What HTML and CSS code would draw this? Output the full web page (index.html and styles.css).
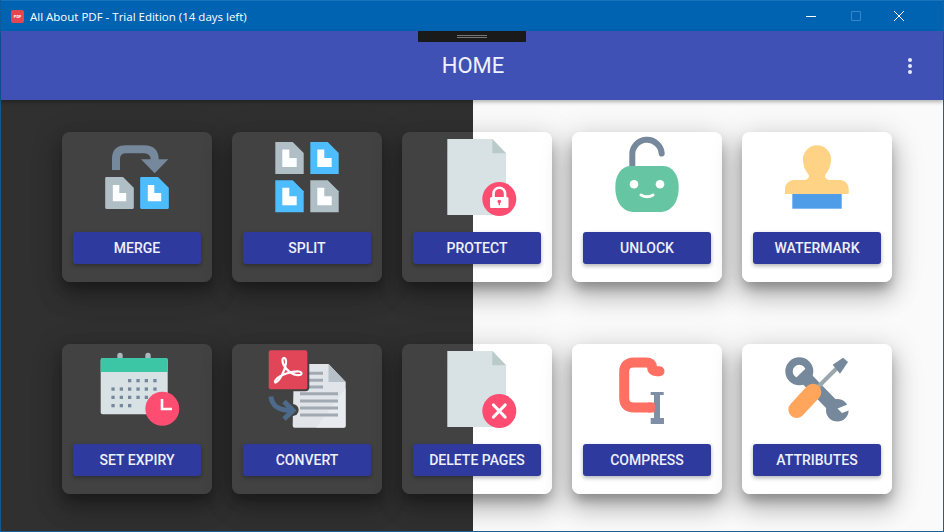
FILE: index.html
```html
<!DOCTYPE html>
<html lang="en">
<head>
    <meta charset="UTF-8">
    <meta name="viewport" content="width=device-width, initial-scale=1.0">
    <title>All About PDF</title>
    <link rel="stylesheet" href="styles.css">
</head>
<body>

<!-- Shared shapes -->
<svg class="defs" aria-hidden="true">
    <defs>
        <symbol id="small-doc" viewBox="0 0 28.4 32" overflow="visible">
            <path d="M0 0H17.4L28.4 11V32H0Z"/>
            <path fill="#fdfeff" stroke="none" d="M7 7.5H14V16H21.4V25H7Z"/>
        </symbol>
        <symbol id="big-doc" viewBox="0 0 150 100">
            <path fill="#d8e2e5" d="M45.3 7H90.3L104 21.3V83H45.3Z"/>
            <path fill="#b8cbc9" d="M90.3 7L104 21.3H90.3Z"/>
            <circle cx="97.3" cy="67" r="17" fill="#ff4d72"/>
        </symbol>
    </defs>
</svg>

<div class="window">
    <!-- Title bar -->
    <div class="titlebar">
        <span class="app-icon">PDF</span>
        <span class="app-title">All About PDF - Trial Edition (14 days left)</span>
        <div class="win-controls">
            <svg class="win-btn" viewBox="0 0 44 20"><path stroke="#fff" d="M17 10.5H27"/></svg>
            <svg class="win-btn" viewBox="0 0 44 20"><path stroke="#3a85c8" fill="none" d="M18.5 5.5H27.5V14.5H18.5Z"/></svg>
            <svg class="win-btn" viewBox="0 0 44 20"><path stroke="#fff" d="M17 5L27 15M27 5L17 15"/></svg>
        </div>
    </div>

    <!-- App bar -->
    <header class="appbar">
        <div class="drag-handle"><span></span></div>
        <h1>HOME</h1>
        <button class="menu-btn" aria-label="Menu"><i></i><i></i><i></i></button>
    </header>

    <main class="tools">
        <div class="card">
            <svg class="icon" viewBox="0 0 150 100">
                <path fill="none" stroke="#76889b" stroke-width="8" d="M54 38V27Q54 17.300 64 17.300H82Q92.700 17.300 92.700 28"/>
                <path fill="#76889b" d="M79 27.300H106.300L92.700 41.300Z"/>
                <use href="#small-doc" class="doc-grey rounded" x="44.300" y="46" width="26.400" height="30"/>
                <use href="#small-doc" class="doc-blue rounded" x="79.300" y="46" width="26.400" height="30"/>
            </svg>
            <button class="button">MERGE</button>
        </div>

        <div class="card">
            <svg class="icon" viewBox="0 0 150 100">
                <use href="#small-doc" class="doc-grey" x="43.300" y="10" width="28.400" height="32"/>
                <use href="#small-doc" class="doc-blue" x="78.300" y="10" width="28.400" height="32"/>
                <use href="#small-doc" class="doc-blue" x="43.300" y="48.300" width="28.400" height="32"/>
                <use href="#small-doc" class="doc-grey" x="78.300" y="48.300" width="28.400" height="32"/>
            </svg>
            <button class="button">SPLIT</button>
        </div>

        <div class="card">
            <svg class="icon" viewBox="0 0 150 100">
                <use href="#big-doc" width="150" height="100"/>
                <path fill="none" stroke="#fff" stroke-width="2.600" d="M91.500 66V61.500A5.800 5.800 0 0 1 103.100 61.500V66"/>
                <rect x="88" y="65" width="18.500" height="11" rx="1.500" fill="#fff"/>
                <circle cx="97.300" cy="69.500" r="1.800" fill="#ff4d72"/>
                <rect x="96.600" y="70" width="1.400" height="3.200" fill="#ff4d72"/>
            </svg>
            <button class="button">PROTECT</button>
        </div>

        <div class="card">
            <svg class="icon" viewBox="0 0 150 100">
                <path fill="none" stroke="#76889b" stroke-width="6" stroke-linecap="round" d="M60.300 38V23.500A14.700 14.700 0 0 1 89.700 21.500"/>
                <path fill="#66c6a3" d="M59 34H91C100 34 106.700 42 106.700 55C106.700 72 98 80 88 80H62C52 80 43.300 72 43.300 55C43.300 42 50 34 59 34Z"/>
                <circle cx="62" cy="52.300" r="4.300" fill="#fff"/>
                <circle cx="88" cy="52.300" r="4.300" fill="#fff"/>
                <path fill="none" stroke="#fff" stroke-width="3" stroke-linecap="round" d="M69 63Q75 66.500 81 63"/>
            </svg>
            <button class="button">UNLOCK</button>
        </div>

        <div class="card">
            <svg class="icon" viewBox="0 0 150 100">
                <path fill="#ffd385" d="M43 62V57C43 52 47 48 52 48H62C65 48 67 46 67 44C67 42 61 38 61 27.300A14 14 0 0 1 89 27.300C89 38 83 42 83 44C83 46 85 48 88 48H98C103 48 106.700 52 106.700 57V62Z"/>
                <rect x="50.300" y="62" width="49.400" height="14.700" fill="#4f9de8"/>
            </svg>
            <button class="button">WATERMARK</button>
        </div>

        <div class="card">
            <svg class="icon" viewBox="0 0 150 100">
                <path stroke="#a9b8c0" stroke-width="5.400" stroke-linecap="round" d="M58 11.500V16M86 11.500V16"/>
                <rect x="38.700" y="14" width="67" height="56.300" rx="2" fill="#d8e2e5"/>
                <path fill="#3dc6a6" d="M40.700 14H103.700A2 2 0 0 1 105.700 16V28H38.700V16A2 2 0 0 1 40.700 14Z"/>
                <g fill="#76889b">
                    <rect x="66" y="35" width="3.300" height="3.300"/><rect x="74.400" y="35" width="3.300" height="3.300"/><rect x="82.700" y="35" width="3.300" height="3.300"/><rect x="91.300" y="35" width="3.300" height="3.300"/>
                    <rect x="49.400" y="43.400" width="3.300" height="3.300"/><rect x="57.700" y="43.400" width="3.300" height="3.300"/><rect x="66" y="43.400" width="3.300" height="3.300"/><rect x="74.400" y="43.400" width="3.300" height="3.300"/><rect x="82.700" y="43.400" width="3.300" height="3.300"/><rect x="91.300" y="43.400" width="3.300" height="3.300"/>
                    <rect x="49.400" y="51.700" width="3.300" height="3.300"/><rect x="57.700" y="51.700" width="3.300" height="3.300"/><rect x="66" y="51.700" width="3.300" height="3.300"/><rect x="74.400" y="51.700" width="3.300" height="3.300"/><rect x="82.700" y="51.700" width="3.300" height="3.300"/>
                    <rect x="49.400" y="60" width="3.300" height="3.300"/><rect x="57.700" y="60" width="3.300" height="3.300"/><rect x="66" y="60" width="3.300" height="3.300"/>
                </g>
                <circle cx="100.300" cy="64.700" r="17" fill="#ff4d72"/>
                <path fill="none" stroke="#fff" stroke-width="2.600" d="M100 55V65H110"/>
            </svg>
            <button class="button">SET EXPIRY</button>
        </div>

        <div class="card">
            <svg class="icon" viewBox="0 0 150 100">
                <path fill="#e1e5ea" d="M62 20H96.500L113.700 38V81.700A2 2 0 0 1 111.700 83.700H62.700A2 2 0 0 1 60.700 81.700Z"/>
                <path fill="#eceef2" d="M113.700 44V81.700A2 2 0 0 1 111.700 83.700H84Z" opacity=".6"/>
                <path fill="#b7bfc9" d="M96.500 20L113.700 38H96.500Z"/>
                <g stroke="#a1a9b2" stroke-width="3">
                    <path d="M74 29.300H91M74 36.300H91M74 43H91"/>
                    <path d="M68 49.700H106M68 57H106M68 64H106M68 71H106"/>
                </g>
                <!-- dark notch the arrow sits in -->
                <circle cx="60.700" cy="66" r="6" fill="#424242"/>
                <path fill="none" stroke="#4d6a8a" stroke-width="5" d="M39 52.500C40 62 46 66.500 60 66.500"/>
                <path fill="none" stroke="#4d6a8a" stroke-width="5" d="M52 57.500L61 66.500L52 75"/>
                <rect x="34.700" y="4.300" width="42.600" height="43" rx="4" fill="#424242"/>
                <rect x="36.700" y="6.300" width="38.600" height="39" rx="2" fill="#e04558"/>
                <path fill="none" stroke="#fff" stroke-width="2.200" d="M43.500 38.500C47 38 53 27 54 19C54.500 13.500 51 12.500 50.500 16C50 22 58 30 64.500 31C70.500 32 71 28 67 27.500C60 27 48 31 44.500 35C42.500 37 42.500 39 44 38.500Z"/>
            </svg>
            <button class="button">CONVERT</button>
        </div>

        <div class="card">
            <svg class="icon" viewBox="0 0 150 100">
                <use href="#big-doc" width="150" height="100"/>
                <path fill="none" stroke="#fff" stroke-width="3.200" stroke-linecap="round" d="M91.500 61L103.100 73M103.100 61L91.500 73"/>
            </svg>
            <button class="button">DELETE PAGES</button>
        </div>

        <div class="card">
            <svg class="icon" viewBox="0 0 150 100">
                <g fill="#7f8fa5">
                    <rect x="82" y="48" width="6" height="32"/>
                    <rect x="78.700" y="48" width="13" height="3"/>
                    <rect x="78.700" y="74" width="13.300" height="6"/>
                </g>
                <path fill="none" stroke="#ff7062" stroke-width="10" stroke-linecap="round" d="M87.500 27.300H84.500Q80 27.300 80 23Q79.500 18.500 74 18.500H62Q52.200 18.500 52.200 28V54Q52.200 63.500 62 63.500H78"/>
                <rect x="76" y="58.500" width="6.500" height="10" fill="#ff7062"/>
            </svg>
            <button class="button">COMPRESS</button>
        </div>

        <div class="card">
            <svg class="icon" viewBox="0 0 150 100">
                <path stroke="#76889b" stroke-width="13" d="M59 29L95 66"/>
                <circle cx="95.300" cy="66.300" r="11.300" fill="#76889b"/>
                <path fill="#fff" d="M95.500 64.500L108 59.500V66L100 69Z"/>
                <circle cx="57.300" cy="27.300" r="10.300" fill="none" stroke="#76889b" stroke-width="7.400"/>
                <path stroke="#9aa8ad" stroke-width="4" d="M74 45L98 21"/>
                <path fill="#76889b" d="M90.700 20.700L101 13.700L106 18L98 29.700Z"/>
                <path stroke="#ffa65c" stroke-width="16.700" stroke-linecap="round" d="M54.700 65.700L71 48"/>
            </svg>
            <button class="button">ATTRIBUTES</button>
        </div>
    </main>
</div>

</body>
</html>
```

FILE: styles.css
```css
* {
    box-sizing: border-box;
}
body {
    margin: 0;
    height: 100vh;
    overflow: hidden;
    font-family: Roboto, Arial, sans-serif;
}
.defs {
    position: absolute;
    width: 0;
    height: 0;
}
.window {
    display: flex;
    flex-direction: column;
    height: 100%;
    border: 1px solid #1c6098;
    border-top: none;
    border-left-color: #0f5a98;
}

/* Title bar */
.titlebar {
    display: flex;
    align-items: center;
    flex: 0 0 31px;
    padding-left: 10px;
    background-color: #0063b1;
    border-top: 1px solid #1a72ba;
    color: #fff;
}
.app-icon {
    width: 13px;
    height: 13px;
    border-radius: 2px;
    background-color: #e8464f;
    color: #fff;
    font-size: 4px;
    font-weight: bold;
    line-height: 13px;
    text-align: center;
    overflow: hidden;
}
.app-title {
    margin-left: 6px;
    font-family: "Open Sans", Arial, sans-serif;
    font-size: 11.5px;
}
.win-controls {
    display: flex;
    margin-left: auto;
    padding-right: 22px;
}
.win-btn {
    display: block;
    width: 44px;
    height: 20px;
}

/* App bar */
.appbar {
    position: relative;
    z-index: 2;
    display: flex;
    align-items: center;
    justify-content: center;
    flex: 0 0 69px;
    padding-left: 2px;
    background-color: #3f51b5;
    box-shadow: 0 2px 4px rgba(0, 0, 0, 0.3);
}
.appbar h1 {
    margin: 0;
    color: #f0f2fb;
    font-size: 22px;
    font-weight: 400;
}
.drag-handle {
    position: absolute;
    top: 0;
    left: 417px;
    display: flex;
    justify-content: center;
    width: 108px;
    height: 11px;
    padding-top: 4px;
    background-color: #1a1a1a;
}
.drag-handle span {
    width: 30px;
    height: 3px;
    border-top: 1px solid #777;
    border-bottom: 1px solid #777;
}
.menu-btn {
    position: absolute;
    top: 27px;
    right: 31px;
    display: flex;
    flex-direction: column;
    gap: 2px;
    padding: 0;
    border: none;
    background: none;
}
.menu-btn i {
    width: 4px;
    height: 4px;
    border-radius: 50%;
    background-color: #e8eaf6;
}

/* Tool grid, dark on the left half and light on the right */
.tools {
    flex: 1;
    display: grid;
    grid-template-columns: repeat(5, 150px);
    grid-auto-rows: 150px;
    column-gap: 20px;
    row-gap: 62px;
    padding: 32px 0 0 61px;
    overflow: hidden;
    background: linear-gradient(to right, #303030 473px, #fafafa 473px) fixed;
}
.card {
    display: flex;
    flex-direction: column;
    border-radius: 8px;
    background: linear-gradient(to right, #424242 473px, #fff 473px) fixed;
    box-shadow: 0 8px 12px -2px rgba(0, 0, 0, 0.28), 0 14px 24px 2px rgba(0, 0, 0, 0.18), 0 6px 30px 5px rgba(0, 0, 0, 0.12);
}
.icon {
    display: block;
    width: 150px;
    height: 100px;
}
.button {
    align-self: center;
    width: 128px;
    height: 32px;
    padding: 0;
    border: none;
    border-radius: 3px;
    background-color: #2f3a9e;
    color: #eef0fb;
    font-family: Roboto, Arial, sans-serif;
    font-size: 14px;
    font-weight: 500;
    box-shadow: 0 2px 4px rgba(0, 0, 0, 0.3);
    cursor: pointer;
}

/* Small page icons */
.doc-grey {
    fill: #b0bec5;
    stroke: #b0bec5;
    stroke-width: 0;
}
.doc-blue {
    fill: #4dbdff;
    stroke: #4dbdff;
    stroke-width: 0;
}
.rounded {
    stroke-width: 2.4;
    stroke-linejoin: round;
}
```
